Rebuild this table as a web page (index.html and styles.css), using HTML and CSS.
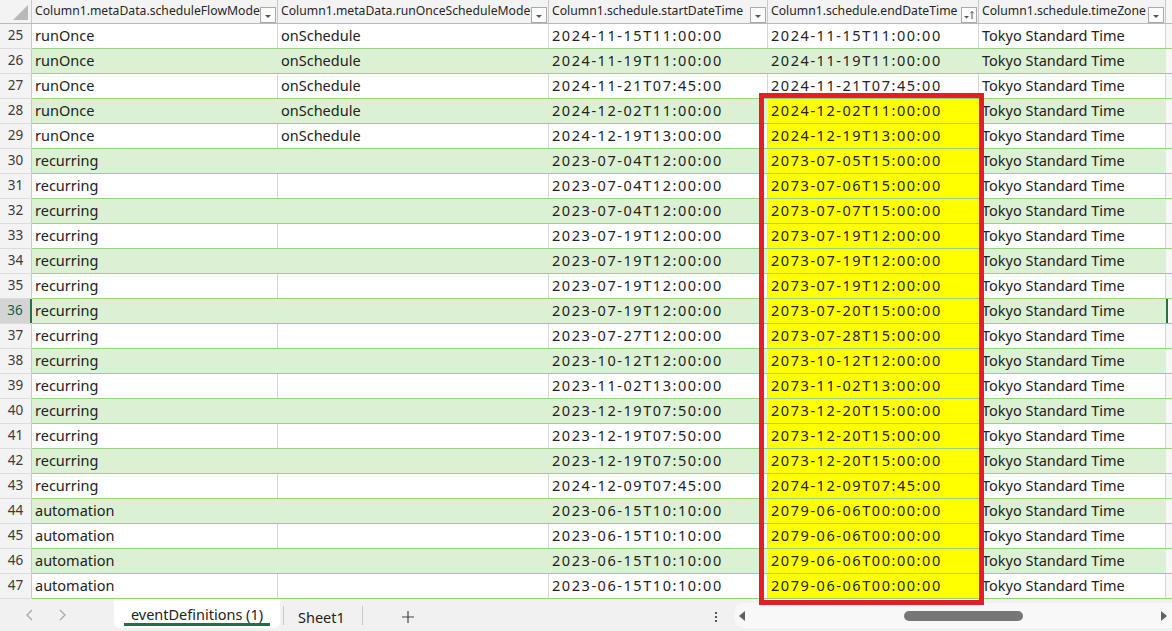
FILE: index.html
```html
<!DOCTYPE html>
<html>
<head>
<meta charset="utf-8">
<link rel="stylesheet" href="styles.css">
</head>
<body>
<div class="app">
  <div class="sheet">
    <div class="row head">
      <div class="corner"><svg width="31" height="23" viewBox="0 0 31 23"><polygon points="13,20 28,5 28,20" fill="#b9b9b9"/></svg></div>
      <div class="hc"><span class="ht">Column1.metaData.scheduleFlowMode</span><span class="fb"><svg width="14" height="14" viewBox="0 0 14 14"><polygon points="4,7 10,7 7,10" fill="#555"/></svg></span></div>
      <div class="hc"><span class="ht">Column1.metaData.runOnceScheduleMode</span><span class="fb"><svg width="14" height="14" viewBox="0 0 14 14"><polygon points="4,7 10,7 7,10" fill="#555"/></svg></span></div>
      <div class="hc"><span class="ht">Column1.schedule.startDateTime</span><span class="fb"><svg width="14" height="14" viewBox="0 0 14 14"><polygon points="4,7 10,7 7,10" fill="#555"/></svg></span></div>
      <div class="hc"><span class="ht">Column1.schedule.endDateTime</span><span class="fb"><svg width="14" height="14" viewBox="0 0 14 14"><polygon points="2,8 7,8 4.5,10.5" fill="#555"/><path d="M10 11V3.5M8.3 5.3L10 3.5L11.7 5.3" stroke="#555" stroke-width="1" fill="none"/></svg></span></div>
      <div class="hc"><span class="ht">Column1.schedule.timeZone</span><span class="fb"><svg width="14" height="14" viewBox="0 0 14 14"><polygon points="4,7 10,7 7,10" fill="#555"/></svg></span></div>
      <div class="rest"></div>
    </div>

    <div class="row w"><div class="rn">25</div><div class="c">runOnce</div><div class="c">onSchedule</div><div class="c dt">2024-11-15T11:00:00</div><div class="c dt">2024-11-15T11:00:00</div><div class="c">Tokyo Standard Time</div><div class="rest"></div></div>
    <div class="row g"><div class="rn">26</div><div class="c">runOnce</div><div class="c">onSchedule</div><div class="c dt">2024-11-19T11:00:00</div><div class="c dt">2024-11-19T11:00:00</div><div class="c">Tokyo Standard Time</div><div class="rest"></div></div>
    <div class="row w"><div class="rn">27</div><div class="c">runOnce</div><div class="c">onSchedule</div><div class="c dt">2024-11-21T07:45:00</div><div class="c dt">2024-11-21T07:45:00</div><div class="c">Tokyo Standard Time</div><div class="rest"></div></div>
    <div class="row g"><div class="rn">28</div><div class="c">runOnce</div><div class="c">onSchedule</div><div class="c dt">2024-12-02T11:00:00</div><div class="c dt y">2024-12-02T11:00:00</div><div class="c">Tokyo Standard Time</div><div class="rest"></div></div>
    <div class="row w"><div class="rn">29</div><div class="c">runOnce</div><div class="c">onSchedule</div><div class="c dt">2024-12-19T13:00:00</div><div class="c dt y">2024-12-19T13:00:00</div><div class="c">Tokyo Standard Time</div><div class="rest"></div></div>
    <div class="row g"><div class="rn">30</div><div class="c">recurring</div><div class="c"></div><div class="c dt">2023-07-04T12:00:00</div><div class="c dt y">2073-07-05T15:00:00</div><div class="c">Tokyo Standard Time</div><div class="rest"></div></div>
    <div class="row w"><div class="rn">31</div><div class="c">recurring</div><div class="c"></div><div class="c dt">2023-07-04T12:00:00</div><div class="c dt y">2073-07-06T15:00:00</div><div class="c">Tokyo Standard Time</div><div class="rest"></div></div>
    <div class="row g"><div class="rn">32</div><div class="c">recurring</div><div class="c"></div><div class="c dt">2023-07-04T12:00:00</div><div class="c dt y">2073-07-07T15:00:00</div><div class="c">Tokyo Standard Time</div><div class="rest"></div></div>
    <div class="row w"><div class="rn">33</div><div class="c">recurring</div><div class="c"></div><div class="c dt">2023-07-19T12:00:00</div><div class="c dt y">2073-07-19T12:00:00</div><div class="c">Tokyo Standard Time</div><div class="rest"></div></div>
    <div class="row g"><div class="rn">34</div><div class="c">recurring</div><div class="c"></div><div class="c dt">2023-07-19T12:00:00</div><div class="c dt y">2073-07-19T12:00:00</div><div class="c">Tokyo Standard Time</div><div class="rest"></div></div>
    <div class="row w"><div class="rn">35</div><div class="c">recurring</div><div class="c"></div><div class="c dt">2023-07-19T12:00:00</div><div class="c dt y">2073-07-19T12:00:00</div><div class="c">Tokyo Standard Time</div><div class="rest"></div></div>
    <div class="row g sel"><div class="rn">36</div><div class="c">recurring</div><div class="c"></div><div class="c dt">2023-07-19T12:00:00</div><div class="c dt y">2073-07-20T15:00:00</div><div class="c">Tokyo Standard Time</div><div class="rest active"></div></div>
    <div class="row w"><div class="rn">37</div><div class="c">recurring</div><div class="c"></div><div class="c dt">2023-07-27T12:00:00</div><div class="c dt y">2073-07-28T15:00:00</div><div class="c">Tokyo Standard Time</div><div class="rest"></div></div>
    <div class="row g"><div class="rn">38</div><div class="c">recurring</div><div class="c"></div><div class="c dt">2023-10-12T12:00:00</div><div class="c dt y">2073-10-12T12:00:00</div><div class="c">Tokyo Standard Time</div><div class="rest"></div></div>
    <div class="row w"><div class="rn">39</div><div class="c">recurring</div><div class="c"></div><div class="c dt">2023-11-02T13:00:00</div><div class="c dt y">2073-11-02T13:00:00</div><div class="c">Tokyo Standard Time</div><div class="rest"></div></div>
    <div class="row g"><div class="rn">40</div><div class="c">recurring</div><div class="c"></div><div class="c dt">2023-12-19T07:50:00</div><div class="c dt y">2073-12-20T15:00:00</div><div class="c">Tokyo Standard Time</div><div class="rest"></div></div>
    <div class="row w"><div class="rn">41</div><div class="c">recurring</div><div class="c"></div><div class="c dt">2023-12-19T07:50:00</div><div class="c dt y">2073-12-20T15:00:00</div><div class="c">Tokyo Standard Time</div><div class="rest"></div></div>
    <div class="row g"><div class="rn">42</div><div class="c">recurring</div><div class="c"></div><div class="c dt">2023-12-19T07:50:00</div><div class="c dt y">2073-12-20T15:00:00</div><div class="c">Tokyo Standard Time</div><div class="rest"></div></div>
    <div class="row w"><div class="rn">43</div><div class="c">recurring</div><div class="c"></div><div class="c dt">2024-12-09T07:45:00</div><div class="c dt y">2074-12-09T07:45:00</div><div class="c">Tokyo Standard Time</div><div class="rest"></div></div>
    <div class="row g"><div class="rn">44</div><div class="c">automation</div><div class="c"></div><div class="c dt">2023-06-15T10:10:00</div><div class="c dt y">2079-06-06T00:00:00</div><div class="c">Tokyo Standard Time</div><div class="rest"></div></div>
    <div class="row w"><div class="rn">45</div><div class="c">automation</div><div class="c"></div><div class="c dt">2023-06-15T10:10:00</div><div class="c dt y">2079-06-06T00:00:00</div><div class="c">Tokyo Standard Time</div><div class="rest"></div></div>
    <div class="row g"><div class="rn">46</div><div class="c">automation</div><div class="c"></div><div class="c dt">2023-06-15T10:10:00</div><div class="c dt y">2079-06-06T00:00:00</div><div class="c">Tokyo Standard Time</div><div class="rest"></div></div>
    <div class="row w"><div class="rn">47</div><div class="c">automation</div><div class="c"></div><div class="c dt">2023-06-15T10:10:00</div><div class="c dt y">2079-06-06T00:00:00</div><div class="c">Tokyo Standard Time</div><div class="rest"></div></div>

    <div class="redbox"></div>
  </div>

  <div class="tabbar">
    <div class="nav">
      <svg width="12" height="14" viewBox="0 0 12 14"><path d="M8 2L3 7L8 12" stroke="#a8a8a8" stroke-width="1.3" fill="none"/></svg>
      <svg width="12" height="14" viewBox="0 0 12 14"><path d="M4 2L9 7L4 12" stroke="#a8a8a8" stroke-width="1.3" fill="none"/></svg>
    </div>
    <div class="tab active-tab"><span class="tl">eventDefinitions (1)</span></div>
    <div class="tsep"></div>
    <div class="tab plain"><span class="tl">Sheet1</span></div>
    <div class="tsep"></div>
    <div class="plus"><svg width="14" height="14" viewBox="0 0 14 14"><path d="M7 1V13M1 7H13" stroke="#444" stroke-width="1.2"/></svg></div>
    <div class="spacer"></div>
    <div class="dots"><svg width="4" height="14" viewBox="0 0 4 14"><circle cx="2" cy="3" r="1.1" fill="#333"/><circle cx="2" cy="7" r="1.1" fill="#333"/><circle cx="2" cy="11" r="1.1" fill="#333"/></svg></div>
    <div class="hscroll">
      <svg width="8" height="10" viewBox="0 0 8 10"><polygon points="7,0 7,10 1,5" fill="#606060"/></svg>
      <div class="track"><div class="thumb"></div></div>
      <svg width="8" height="10" viewBox="0 0 8 10"><polygon points="1,0 1,10 7,5" fill="#606060"/></svg>
    </div>
  </div>
</div>
</body>
</html>
```
FILE: styles.css
```css
* { box-sizing: border-box; }
html, body { margin: 0; padding: 0; }
body {
  width: 1172px;
  height: 631px;
  overflow: hidden;
  background: #ffffff;
  font-family: "Noto Sans", "Noto Sans CJK JP", sans-serif;
  color: #222222;
}
.app {
  display: flex;
  flex-direction: column;
  height: 631px;
}
.sheet {
  position: relative;
  height: 599px;
}
.row {
  display: grid;
  grid-template-columns: 32px 246px 271px 219px 211px 187px 6px;
  height: 25px;
  border-bottom: 1px solid #95d27e;
}
.row.head {
  height: 24px;
  background: #f3f3f3;
  border-bottom: 1px solid #b9b9b9;
}
.corner {
  border-right: 1px solid #c9c9c9;
  line-height: 0;
}
.hc {
  display: flex;
  align-items: flex-end;
  border-right: 1px solid #c9c9c9;
  padding: 0 1px 0 3px;
  min-width: 0;
}
.ht {
  flex: 1;
  min-width: 0;
  overflow: hidden;
  white-space: nowrap;
  font-size: 12.2px;
  line-height: 22px;
  align-self: flex-start;
  color: #262626;
}
.fb {
  flex: none;
  width: 16px;
  height: 16px;
  border: 1px solid #a9a9a9;
  background: #fbfbfb;
  line-height: 0;
  display: flex;
  align-items: center;
  justify-content: center;
}
.rn {
  background: #f3f3f3;
  border-right: 1px solid #c9c9c9;
  font-size: 13.5px;
  line-height: 23px;
  text-align: center;
  color: #3a3a3a;
  box-shadow: 0 1px 0 #dcdcdc;
}
.row.sel .rn {
  background: #d4d4d4;
  color: #1d5f3a;
  border-right: 2px solid #217346;
}
.c {
  font-size: 14.5px;
  line-height: 23px;
  padding-left: 3px;
  white-space: nowrap;
  overflow: hidden;
}
.row.w .c { border-right: 1px solid #d6d6d6; }
.row.g .c { background: #dcf1d3; border-right: 1px solid #dcf1d3; }
.c.dt { letter-spacing: 1.55px; }
.c.y { background: #ffff00 !important; border-right-color: #ffff00 !important; }
.rest { background: #f7f7f7; }
.rest.active { box-shadow: inset 2px 0 0 #217346; }
.redbox {
  position: absolute;
  left: 759px;
  top: 93px;
  width: 225px;
  height: 512px;
  border: 5px solid #e41e29;
  z-index: 2;
}
.tabbar {
  flex: 1;
  display: flex;
  align-items: stretch;
  background: #f1f1f1;
  height: 32px;
}
.nav {
  display: flex;
  align-items: center;
  gap: 20px;
  padding-left: 24px;
  width: 114px;
  flex: none;
}
.tab {
  display: flex;
  align-items: flex-start;
  justify-content: center;
  font-size: 14.5px;
  color: #222;
  height: 29px;
  white-space: nowrap;
  flex: none;
}
.tab.plain { padding: 0 14px; }
.active-tab {
  background: #ffffff;
  border-radius: 0 0 6px 6px;
  width: 166px;
}
.tl { line-height: 20px; margin-top: 8px; }
.active-tab .tl {
  border-bottom: 3px solid #1e7145;
  padding: 0 7px;
  margin-top: 7px;
  line-height: 17px;
}
.tsep {
  width: 1px;
  flex: none;
  background: #c8c8c8;
  margin: 7px 0 6px 3px;
}
.plus {
  display: flex;
  align-items: center;
  padding-left: 38px;
  padding-top: 3px;
}
.spacer { flex: 1; }
.dots {
  display: flex;
  align-items: center;
  padding-top: 4px;
  margin-right: 16px;
}
.hscroll {
  width: 438px;
  flex: none;
  display: flex;
  align-items: center;
  background: #f8f8f8;
  border-radius: 10px 0 0 10px;
  margin: 4px 0 3px;
  padding: 0 4px;
}
.track {
  flex: 1;
  height: 10px;
  position: relative;
  margin: 0 4px;
}
.thumb {
  position: absolute;
  left: 154px;
  width: 119px;
  top: 0;
  height: 10px;
  border-radius: 5px;
  background: #777777;
}
```
